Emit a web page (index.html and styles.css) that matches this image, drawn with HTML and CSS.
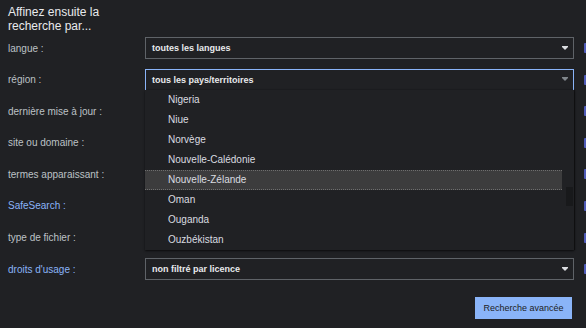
FILE: index.html
```html
<!DOCTYPE html>
<html lang="fr">
<head>
    <meta charset="UTF-8">
    <title>Recherche avancée</title>
    <link rel="stylesheet" href="styles.css">
</head>
<body>
    <div class="title">Affinez ensuite la<br>recherche par...</div>

    <div class="rows">
        <div class="row">
            <div class="label">langue :</div>
            <div class="select"><span>toutes les langues</span><i class="arrow"></i></div>
            <div class="help"></div>
        </div>
        <div class="row">
            <div class="label">région :</div>
            <div class="select open">
                <span>tous les pays/territoires</span><i class="arrow dim"></i>
                <ul class="dropdown">
                    <li>Nigeria</li>
                    <li>Niue</li>
                    <li>Norvège</li>
                    <li>Nouvelle-Calédonie</li>
                    <li class="hover">Nouvelle-Zélande</li>
                    <li>Oman</li>
                    <li>Ouganda</li>
                    <li>Ouzbékistan</li>
                    <div class="thumb"></div>
                </ul>
            </div>
            <div class="help"></div>
        </div>
        <div class="row">
            <div class="label">dernière mise à jour :</div>
            <div class="select"></div>
            <div class="help"></div>
        </div>
        <div class="row">
            <div class="label">site ou domaine :</div>
            <div class="select"></div>
            <div class="help"></div>
        </div>
        <div class="row">
            <div class="label">termes apparaissant :</div>
            <div class="select"></div>
            <div class="help"></div>
        </div>
        <div class="row">
            <div class="label link">SafeSearch :</div>
            <div class="select"></div>
            <div class="help"></div>
        </div>
        <div class="row">
            <div class="label">type de fichier :</div>
            <div class="select"></div>
            <div class="help"></div>
        </div>
        <div class="row">
            <div class="label link">droits d'usage :</div>
            <div class="select"><span>non filtré par licence</span><i class="arrow"></i></div>
            <div class="help"></div>
        </div>
    </div>

    <div class="actions">
        <button class="submit">Recherche avancée</button>
    </div>
</body>
</html>
```

FILE: styles.css
```css
body {
    margin: 0;
    padding: 5px 0 0 8px;
    background: #202124;
    color: #bdc1c6;
    font-family: "Liberation Sans", Arial, sans-serif;
    font-size: 10px;
    overflow: hidden;
}

.title {
    font-size: 12px;
    line-height: 14px;
    color: #e8eaed;
    margin-bottom: 4px;
}

.rows {
    display: flex;
    flex-direction: column;
    gap: 9.6px;
}

.row {
    display: flex;
    align-items: center;
    height: 22px;
}

.label {
    width: 137px;
    flex-shrink: 0;
}

.label.link {
    color: #8ab4f8;
}

.select {
    position: relative;
    box-sizing: border-box;
    width: 429px;
    height: 22px;
    flex-shrink: 0;
    display: flex;
    align-items: center;
    justify-content: space-between;
    padding: 0 5px 0 6px;
    border: 1px solid #5f6368;
    background: #202124;
    color: #e8eaed;
    font-size: 9px;
    font-weight: bold;
}

.select.open {
    border-color: #8ab4f8;
    border-bottom-color: transparent;
}

.arrow {
    width: 0;
    height: 0;
    border-left: 3px solid transparent;
    border-right: 3px solid transparent;
    border-top: 3px solid #dadce0;
    box-shadow: 0 -1px 0 #dadce0;
}

.arrow.dim {
    border-top-color: #80868b;
    box-shadow: 0 -1px 0 #80868b;
}

.help {
    width: 12px;
    height: 10px;
    margin-left: 10px;
    border-radius: 1px;
    background: #4f5bb8;
    flex-shrink: 0;
}

.dropdown {
    position: absolute;
    top: 20px;
    left: -1px;
    width: 429px;
    margin: 0;
    padding: 0;
    list-style: none;
    background: #202124;
    box-shadow: 0 1px 2px rgba(0, 0, 0, 0.6), 1px 0 1px rgba(0, 0, 0, 0.4);
    z-index: 2;
    font-size: 10px;
    font-weight: normal;
    color: #dadce0;
}

.dropdown li {
    box-sizing: border-box;
    height: 20px;
    line-height: 20px;
    padding-left: 23px;
    margin-right: 12px;
}

.dropdown li.hover {
    background: #3c3c3d;
    border-top: 1px dotted #6e6e6e;
    border-bottom: 1px dotted #6e6e6e;
    line-height: 18px;
}

.thumb {
    position: absolute;
    right: 1px;
    top: 97px;
    width: 7px;
    height: 19px;
    background: #18191b;
}

.actions {
    display: flex;
    justify-content: flex-end;
    width: 564px;
    margin-top: 17px;
}

.submit {
    width: 97px;
    height: 22px;
    border: none;
    padding: 0;
    background: #8ab4f8;
    color: #202124;
    font-family: "Liberation Sans", Arial, sans-serif;
    font-size: 9px;
}
```
